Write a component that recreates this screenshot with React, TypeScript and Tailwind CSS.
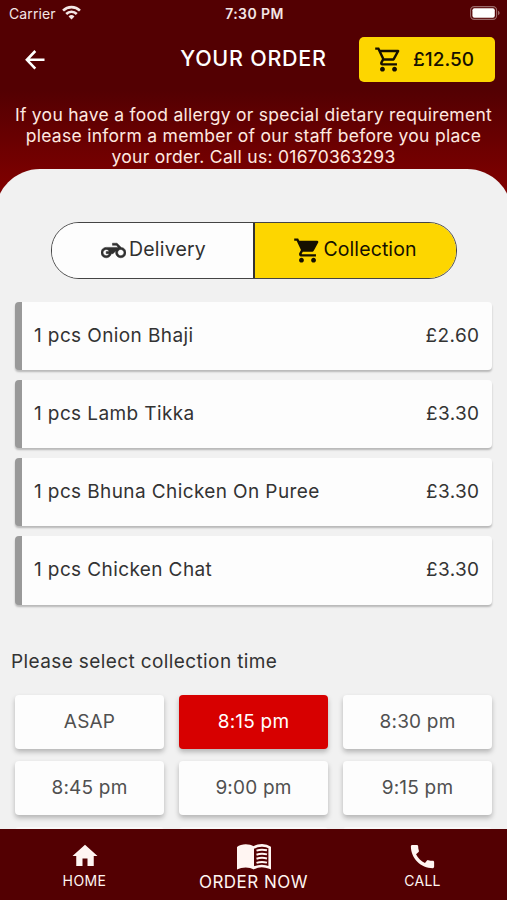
import React, { useState } from "react";
import { MdCall, MdHome, MdOutlineShoppingCart, MdShoppingCart } from "react-icons/md";

const items = [
  { name: "1 pcs Onion Bhaji", price: "£2.60" },
  { name: "1 pcs Lamb Tikka", price: "£3.30" },
  { name: "1 pcs Bhuna Chicken On Puree", price: "£3.30" },
  { name: "1 pcs Chicken Chat", price: "£3.30" },
];

const times = ["ASAP", "8:15 pm", "8:30 pm", "8:45 pm", "9:00 pm", "9:15 pm"];

const BackIcon: React.FC = () => (
  <svg width="20" height="20" viewBox="0 0 20 20" fill="none" stroke="currentColor" strokeWidth="2.6">
    <path d="M10.300 1 1.900 9.800l8.400 8.800M2 9.800h17.500" />
  </svg>
);

const MotorcycleIcon: React.FC = () => (
  <svg width="25" height="25" viewBox="0 0 24 24" fill="currentColor" stroke="currentColor" strokeWidth="0.5">
    <path d="M19.44 9.03 15.41 5H11v2h3.59l2 2H5c-2.8 0-5 2.2-5 5s2.2 5 5 5c2.46 0 4.45-1.69 4.9-4h1.65l2.77-2.77c-.21.54-.32 1.14-.32 1.77 0 2.8 2.2 5 5 5s5-2.2 5-5c0-2.65-1.97-4.77-4.56-4.97zM7.82 15C7.4 16.15 6.28 17 5 17c-1.63 0-3-1.37-3-3s1.37-3 3-3c1.28 0 2.4.85 2.82 2H5v2h2.82zM19 17c-1.66 0-3-1.34-3-3s1.34-3 3-3 3 1.34 3 3-1.34 3-3 3z" />
  </svg>
);

const MenuBookIcon: React.FC = () => (
  <svg width="34" height="26" viewBox="0 0 34 26" fill="none" stroke="currentColor">
    <path d="M0 3C4-.3 12-.8 17 2.6v22.9C12 22.6 5 22.8 0 25.6z" fill="currentColor" stroke="none" />
    <path d="M16.6 3.6C21 .7 29 .6 32.7 3.6v20c-5-2-11.5-2-16.1.4" strokeWidth="2.6" />
    <path
      d="M19.5 6.6c3-1.1 7-1.2 10.5-.3M19.5 10.7c3-1.1 7-1.2 10.5-.3M19.5 14.8c3-1.1 7-1.2 10.5-.3M19.5 18.9c3-1.1 7-1.2 10.5-.3"
      strokeWidth="2"
    />
  </svg>
);

const StatusBar: React.FC = () => (
  <div className="grid h-[27px] grid-cols-3 items-center pl-[9px] pr-[7px] text-[14px] text-[#f3e6e6]">
    <div className="flex items-center gap-[6px]">
      <span className="tracking-[0.1px]">Carrier</span>
      <svg className="-mt-[2px]" width="19" height="15" viewBox="0 0 18 14" fill="none" stroke="currentColor" strokeWidth="2.5">
        <path d="M1 5.2a11.4 11.4 0 0 1 16 0" />
        <path d="M4 8.4a7.1 7.1 0 0 1 10 0" />
        <path d="M9 13.6 6.2 10.7a4 4 0 0 1 5.6 0z" fill="currentColor" stroke="none" />
      </svg>
    </div>
    <span className="text-center font-semibold tracking-[0.4px] whitespace-nowrap">7:30 PM</span>
    <svg className="-mt-px justify-self-end" width="30" height="14" viewBox="0 0 30 14">
      <rect x="0.6" y="0.6" width="26" height="12.8" rx="3.6" fill="none" stroke="#9b6a6a" strokeWidth="1.1" />
      <rect x="2.4" y="2.3" width="22.4" height="9.4" rx="2" fill="#fff" />
      <path d="M28 4.8c1 .4 1.6 1.2 1.6 2.2s-.6 1.8-1.6 2.2z" fill="#9b6a6a" />
    </svg>
  </div>
);

const Header: React.FC = () => (
  <div className="grid h-[65px] grid-cols-[1fr_auto_1fr] items-center px-3">
    <button className="ml-[13px] w-fit cursor-pointer">
      <BackIcon />
    </button>
    <h1 className="-mt-[2px] text-[21.5px] font-medium tracking-[0.75px]">YOUR ORDER</h1>
    <button className="flex h-[45px] w-[136px] items-center justify-self-end rounded-[5px] bg-[#fdd600] pl-[15px] text-[#151000] cursor-pointer">
      <MdOutlineShoppingCart size={29} />
      <span className="mt-px ml-[10px] text-[19px] font-medium">£12.50</span>
    </button>
  </div>
);

const OrderType: React.FC = () => {
  const [type, setType] = useState("collection");
  const active = "bg-[#fdd600] text-[#151000]";
  const idle = "bg-[#fdfdfd] text-[#303030]";

  return (
    <div className="mx-auto flex h-[57px] w-[406px] overflow-hidden rounded-[28px] border border-[#444]">
      <button
        onClick={() => setType("delivery")}
        className={`flex w-1/2 items-center justify-center gap-[3px] border-r border-[#333] pb-px pl-[3px] text-[19.5px] cursor-pointer ${type === "delivery" ? active : idle}`}
      >
        <MotorcycleIcon />
        <span className="tracking-[0.2px]">Delivery</span>
      </button>
      <button
        onClick={() => setType("collection")}
        className={`flex w-1/2 items-center justify-center gap-px border-l border-[#333] pb-px text-[19.5px] cursor-pointer ${type === "collection" ? active : idle}`}
      >
        <MdShoppingCart size={29} />
        <span className="tracking-[0.1px]">Collection</span>
      </button>
    </div>
  );
};

const OrderItems: React.FC = () => (
  <div className="mt-[22.5px] flex flex-col gap-[9.7px] px-[15px]">
    {items.map((item) => (
      <div
        key={item.name}
        className="flex h-[68.5px] items-center justify-between rounded-[4px] border-l-[7px] border-[#999] bg-[#fdfdfd] pr-[12.5px] pl-[12px] text-[19px] tracking-[0.39px] text-[#333] shadow-[0_2px_2px_rgba(0,0,0,0.24)]"
      >
        <span>{item.name}</span>
        <span>{item.price}</span>
      </div>
    ))}
  </div>
);

const CollectionTimes: React.FC = () => {
  const [selected, setSelected] = useState("8:15 pm");

  return (
    <>
      <p className="mt-[43.4px] ml-[11px] text-[19px] leading-[28px] tracking-[0.39px] text-[#333]">
        Please select collection time
      </p>
      <div className="mt-[19px] grid grid-cols-3 gap-x-[15px] gap-y-[12px] px-[15px]">
        {times.map((time) => (
          <button
            key={time}
            onClick={() => setSelected(time)}
            className={`h-[54px] rounded-[4px] text-[19px] tracking-[0.2px] shadow-[0_3px_5px_rgba(0,0,0,0.25)] cursor-pointer ${
              selected === time ? "bg-[#d70000] text-white" : "bg-[#fdfdfd] text-[#505050]"
            }`}
          >
            {time}
          </button>
        ))}
        {/* next row starts just above the nav */}
        {[0, 1, 2].map((slot) => (
          <div key={slot} className="h-[54px] rounded-[4px] bg-[#f8f8f8]" />
        ))}
      </div>
    </>
  );
};

const BottomNav: React.FC = () => (
  <nav className="grid h-[71px] shrink-0 grid-cols-3 bg-[#530002] text-[#fff5f2]">
    <button className="flex flex-col items-center pt-[12px] cursor-pointer">
      <MdHome size={30} />
      <span className="mt-px text-[14px] leading-[18px] tracking-[0.4px]">HOME</span>
    </button>
    <button className="flex flex-col items-center pt-[15px] cursor-pointer">
      <MenuBookIcon />
      <span className="mt-[2px] text-[17px] leading-[20px] tracking-[0.5px]">ORDER NOW</span>
    </button>
    <button className="flex flex-col items-center pt-[12px] cursor-pointer">
      <MdCall size={31} />
      <span className="text-[14px] leading-[18px] tracking-[0.3px]">CALL</span>
    </button>
  </nav>
);

export default function App() {
  return (
    <div className="flex h-[900px] w-[507px] flex-col overflow-hidden bg-[#f1f1f1] font-['Inter',sans-serif]">
      <div className="h-[220px] shrink-0 bg-[linear-gradient(#530002_90px,#800000_190px)] text-white">
        <StatusBar />
        <Header />
        <p className="mt-[12px] text-center text-[17.5px] leading-[21px] tracking-[0.28px] whitespace-nowrap text-[#ffe9e0]">
          If you have a food allergy or special dietary requirement
          <br />
          please inform a member of our staff before you place
          <br />
          your order. Call us: 01670363293
        </p>
      </div>

      <main className="-mx-[5px] -mt-[51px] min-h-0 flex-1 overflow-hidden rounded-t-[45px] bg-[#f1f1f1] px-[5px] pt-[53px]">
        <OrderType />
        <OrderItems />
        <CollectionTimes />
      </main>

      <BottomNav />
    </div>
  );
}
